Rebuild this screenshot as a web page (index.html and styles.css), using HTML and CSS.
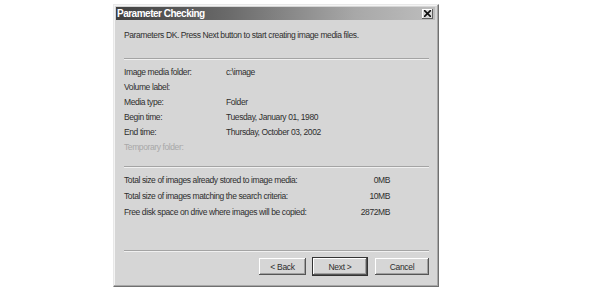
FILE: index.html
```html
<!DOCTYPE html>
<html>
<head>
<meta charset="utf-8">
<link rel="stylesheet" href="styles.css">
</head>
<body>
<div class="dialog">
  <div class="titlebar">
    <span class="title">Parameter Checking</span>
    <span class="close"><svg width="7" height="7" viewBox="0 0 7 7"><path d="M0 0L7 7M7 0L0 7" stroke="#111" stroke-width="1.6"/></svg></span>
  </div>
  <div class="body">
    <div class="intro">Parameters DK. Press Next button to start creating image media files.</div>
    <div class="sep"></div>
    <div class="info">
      <span>Image media folder:</span><span>c:\image</span>
      <span>Volume label:</span><span></span>
      <span>Media type:</span><span>Folder</span>
      <span>Begin time:</span><span>Tuesday, January 01, 1980</span>
      <span>End time:</span><span>Thursday, October 03, 2002</span>
      <span class="disabled">Temporary folder:</span><span></span>
    </div>
    <div class="sep"></div>
    <div class="sizes">
      <span>Total size of images already stored to image media:</span><span class="num">0MB</span>
      <span>Total size of images matching the search criteria:</span><span class="num">10MB</span>
      <span>Free disk space on drive where images will be copied:</span><span class="num">2872MB</span>
    </div>
    <div class="sep bottom"></div>
    <div class="buttons">
      <button class="btn">&lt; Back</button>
      <button class="btn default">Next &gt;</button>
      <button class="btn cancel">Cancel</button>
    </div>
  </div>
</div>
</body>
</html>
```
FILE: styles.css
```css
html, body {
  margin: 0;
  padding: 0;
  background: #ffffff;
}
body {
  font-family: "Liberation Sans", Arial, sans-serif;
  font-size: 8.5px;
  letter-spacing: -0.4px;
  color: #2e2e2e;
}
.dialog {
  margin: 4px 0 0 113px;
  width: 326px;
  height: 283px;
  box-sizing: border-box;
  background: #d6d6d6;
  border-top: 1px solid #e8e8e8;
  border-left: 1px solid #e8e8e8;
  border-right: 1px solid #707070;
  border-bottom: 1px solid #707070;
  box-shadow: inset -1px -1px 0 #a8a8a8, inset 1px 1px 0 #f4f4f4;
  padding: 2px 3px 3px 2px;
  display: flex;
  flex-direction: column;
}
.titlebar {
  height: 13px;
  background: linear-gradient(to right, #404040 0%, #6a6a6a 35%, #a8a8a8 75%, #bdbdbd 100%);
  display: flex;
  align-items: center;
  justify-content: space-between;
  padding: 0 2px 0 1px;
}
.title {
  color: #ffffff;
  font-weight: bold;
  font-size: 10px;
  letter-spacing: -0.5px;
}
.close {
  width: 11px;
  height: 10px;
  background: #d8d8d8;
  box-shadow: inset -1px -1px 0 #606060, inset 1px 1px 0 #ffffff;
  display: flex;
  align-items: center;
  justify-content: center;
}
.body {
  flex: 1;
  padding: 0 6px 0 8px;
  display: flex;
  flex-direction: column;
}
.intro {
  margin-top: 10px;
  height: 28px;
}
.sep {
  height: 1px;
  background: #a4a4a4;
  border-bottom: 1px solid #f0f0f0;
}
.info {
  margin-top: 7px;
  display: grid;
  grid-template-columns: 102px 1fr;
  grid-auto-rows: 15px;
  height: 99px;
}
.disabled {
  color: #a8a8a8;
}
.sizes {
  margin-top: 7px;
  display: grid;
  grid-template-columns: 226px 40px;
  grid-auto-rows: 16px;
  height: 75px;
}
.num {
  text-align: right;
}
.buttons {
  margin-top: 6px;
  display: flex;
  justify-content: flex-end;
  gap: 7px;
}
.btn {
  font-family: "Liberation Sans", Arial, sans-serif;
  font-size: 8.5px;
  letter-spacing: -0.3px;
  color: #2e2e2e;
  width: 47px;
  height: 17px;
  padding: 0;
  margin: 0;
  background: #d6d6d6;
  border: none;
  box-shadow: inset -1px -1px 0 #555555, inset 1px 1px 0 #ffffff, inset -2px -2px 0 #a0a0a0;
}
.btn.default {
  width: 54px;
  box-shadow: 0 0 0 1px #333333, inset -1px -1px 0 #555555, inset 1px 1px 0 #ffffff, inset -2px -2px 0 #a0a0a0;
}
.btn.cancel {
  width: 54px;
  margin-left: 1px;
}
```
